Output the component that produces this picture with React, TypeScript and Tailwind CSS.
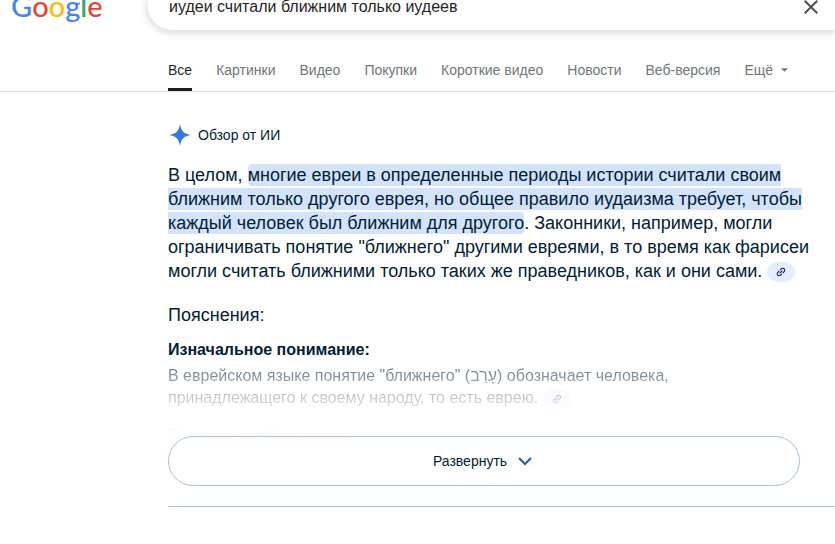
const tabs = ["Картинки", "Видео", "Покупки", "Короткие видео", "Новости", "Веб-версия"];

function SourceLink() {
  return (
    <button
      type="button"
      aria-label="Источники"
      className="inline-flex h-5 w-7 items-center justify-center rounded-full bg-[#e5edff] align-middle text-[#001d35]"
    >
      <svg viewBox="0 0 24 24" className="size-3 -rotate-45" fill="currentColor" aria-hidden="true">
        <path d="M11 17H7q-2.075 0-3.537-1.463Q2 14.075 2 12t1.463-3.537Q4.925 7 7 7h4v2H7q-1.25 0-2.125.875T4 12t.875 2.125T7 15h4zm-3-4v-2h8v2zm5 4v-2h4q1.25 0 2.125-.875T20 12t-.875-2.125T17 9h-4V7h4q2.075 0 3.538 1.463Q22 9.925 22 12t-1.462 3.537Q19.075 17 17 17z" />
      </svg>
    </button>
  );
}

function Header() {
  return (
    <header className="border-b border-[#dadce0]">
      <div className="flex h-[50px] overflow-hidden">
        <a
          href="#"
          aria-label="Google"
          className="flex h-6 w-[148px] shrink-0 items-end pl-[11px] font-['Lato',sans-serif] text-[29px] leading-9 font-medium"
        >
          <span className="text-[#4285f4]">G</span>
          <span className="text-[#ea4335]">o</span>
          <span className="text-[#fbbc05]">o</span>
          <span className="text-[#4285f4]">g</span>
          <span className="text-[#34a853]">l</span>
          <span className="text-[#ea4335]">e</span>
        </a>
        <form className="flex h-[30px] grow items-start rounded-bl-[24px] pl-[21px] shadow-[0_2px_8px_1px_rgba(64,60,67,0.2)]">
          <input
            type="text"
            aria-label="Поиск"
            defaultValue="иудеи считали ближним только иудеев"
            className="-mt-[5px] h-6 min-w-0 grow bg-transparent text-[16px] text-[#1f1f1f] outline-none"
          />
          <button type="button" aria-label="Очистить" className="-mt-[5px] mr-3 text-[#4d5156]">
            <svg viewBox="0 0 24 24" className="size-6" fill="currentColor" aria-hidden="true">
              <path d="M19 6.41L17.59 5 12 10.59 6.41 5 5 6.41 10.59 12 5 17.59 6.41 19 12 13.41 17.59 19 19 17.59 13.41 12z" />
            </svg>
          </button>
        </form>
      </div>
      <nav className="flex h-[41px] gap-6 pl-[168px] text-[14px] leading-10 whitespace-nowrap text-[#70757a]">
        <a href="#" aria-current="page" className="border-b-3 border-[#1f1f1f] text-[#1f1f1f]">
          Все
        </a>
        {tabs.map((tab) => (
          <a key={tab} href="#">
            {tab}
          </a>
        ))}
        <button type="button" className="flex h-10 items-center gap-2">
          Ещё
          <svg viewBox="0 0 8 4" className="h-1 w-[7px]" fill="currentColor" aria-hidden="true">
            <path d="M0 0h8L4 4z" />
          </svg>
        </button>
      </nav>
    </header>
  );
}

export default function App() {
  return (
    <div className="min-h-screen overflow-hidden bg-white font-['Liberation_Sans',Arial,sans-serif] text-[#001d35]">
      <Header />
      <main className="pl-[168px]">
        <section className="max-w-[632px] pt-[31px]">
          <div className="flex h-6 items-center gap-1.5 text-[14px]">
            <svg viewBox="0 0 24 24" className="size-6" aria-hidden="true">
              <path d="M12 1C13 8 16 11 23 12C16 13 13 16 12 23C11 16 8 13 1 12C8 11 11 8 12 1Z" fill="#3478e5" />
            </svg>
            <h1>Обзор от ИИ</h1>
          </div>
          <p className="mt-4 -mr-5 text-[18px] leading-6">
            В целом,{" "}
            <mark className="rounded-[4px] bg-[#d3e3fd] py-px text-inherit">
              многие евреи в определенные периоды истории считали своим ближним только другого еврея, но общее
              правило иудаизма требует, чтобы каждый человек был ближним для другого
            </mark>
            . Законники, например, могли ограничивать понятие "ближнего" другими евреями, в то время как фарисеи
            могли считать ближними только таких же праведников, как и они сами. <SourceLink />
          </p>
          <h2 className="mt-5 text-[18px] leading-6">Пояснения:</h2>
          <h3 className="mt-3 text-[16px] leading-[22px] font-bold">Изначальное понимание:</h3>
          <div className="mt-1 h-[71px] overflow-hidden text-[16px] leading-[22px] [mask-image:linear-gradient(to_bottom,rgba(0,0,0,0.6),rgba(0,0,0,0.45)_14px,rgba(0,0,0,0.22)_34px,rgba(0,0,0,0.03)_60px,rgba(0,0,0,0.01))]">
            <p className="max-w-[560px]">
              В еврейском языке понятие "ближнего" (עָרֵב) обозначает человека, принадлежащего к своему народу, то
              есть еврею. <SourceLink />
            </p>
            <h3 className="mt-4 font-bold">Толкование фарисеев:</h3>
          </div>
          <button
            type="button"
            className="flex h-[50px] w-full items-center justify-center gap-2 rounded-full border border-[#a8c0dc] bg-white text-[14px]"
          >
            Развернуть
            <svg viewBox="0 0 20 20" className="size-5" fill="none" stroke="#1f5bb5" strokeWidth="2" aria-hidden="true">
              <path d="M4 7l6 6 6-6" />
            </svg>
          </button>
        </section>
        <hr className="mt-5 border-[#a8c0dc]" />
      </main>
    </div>
  );
}
